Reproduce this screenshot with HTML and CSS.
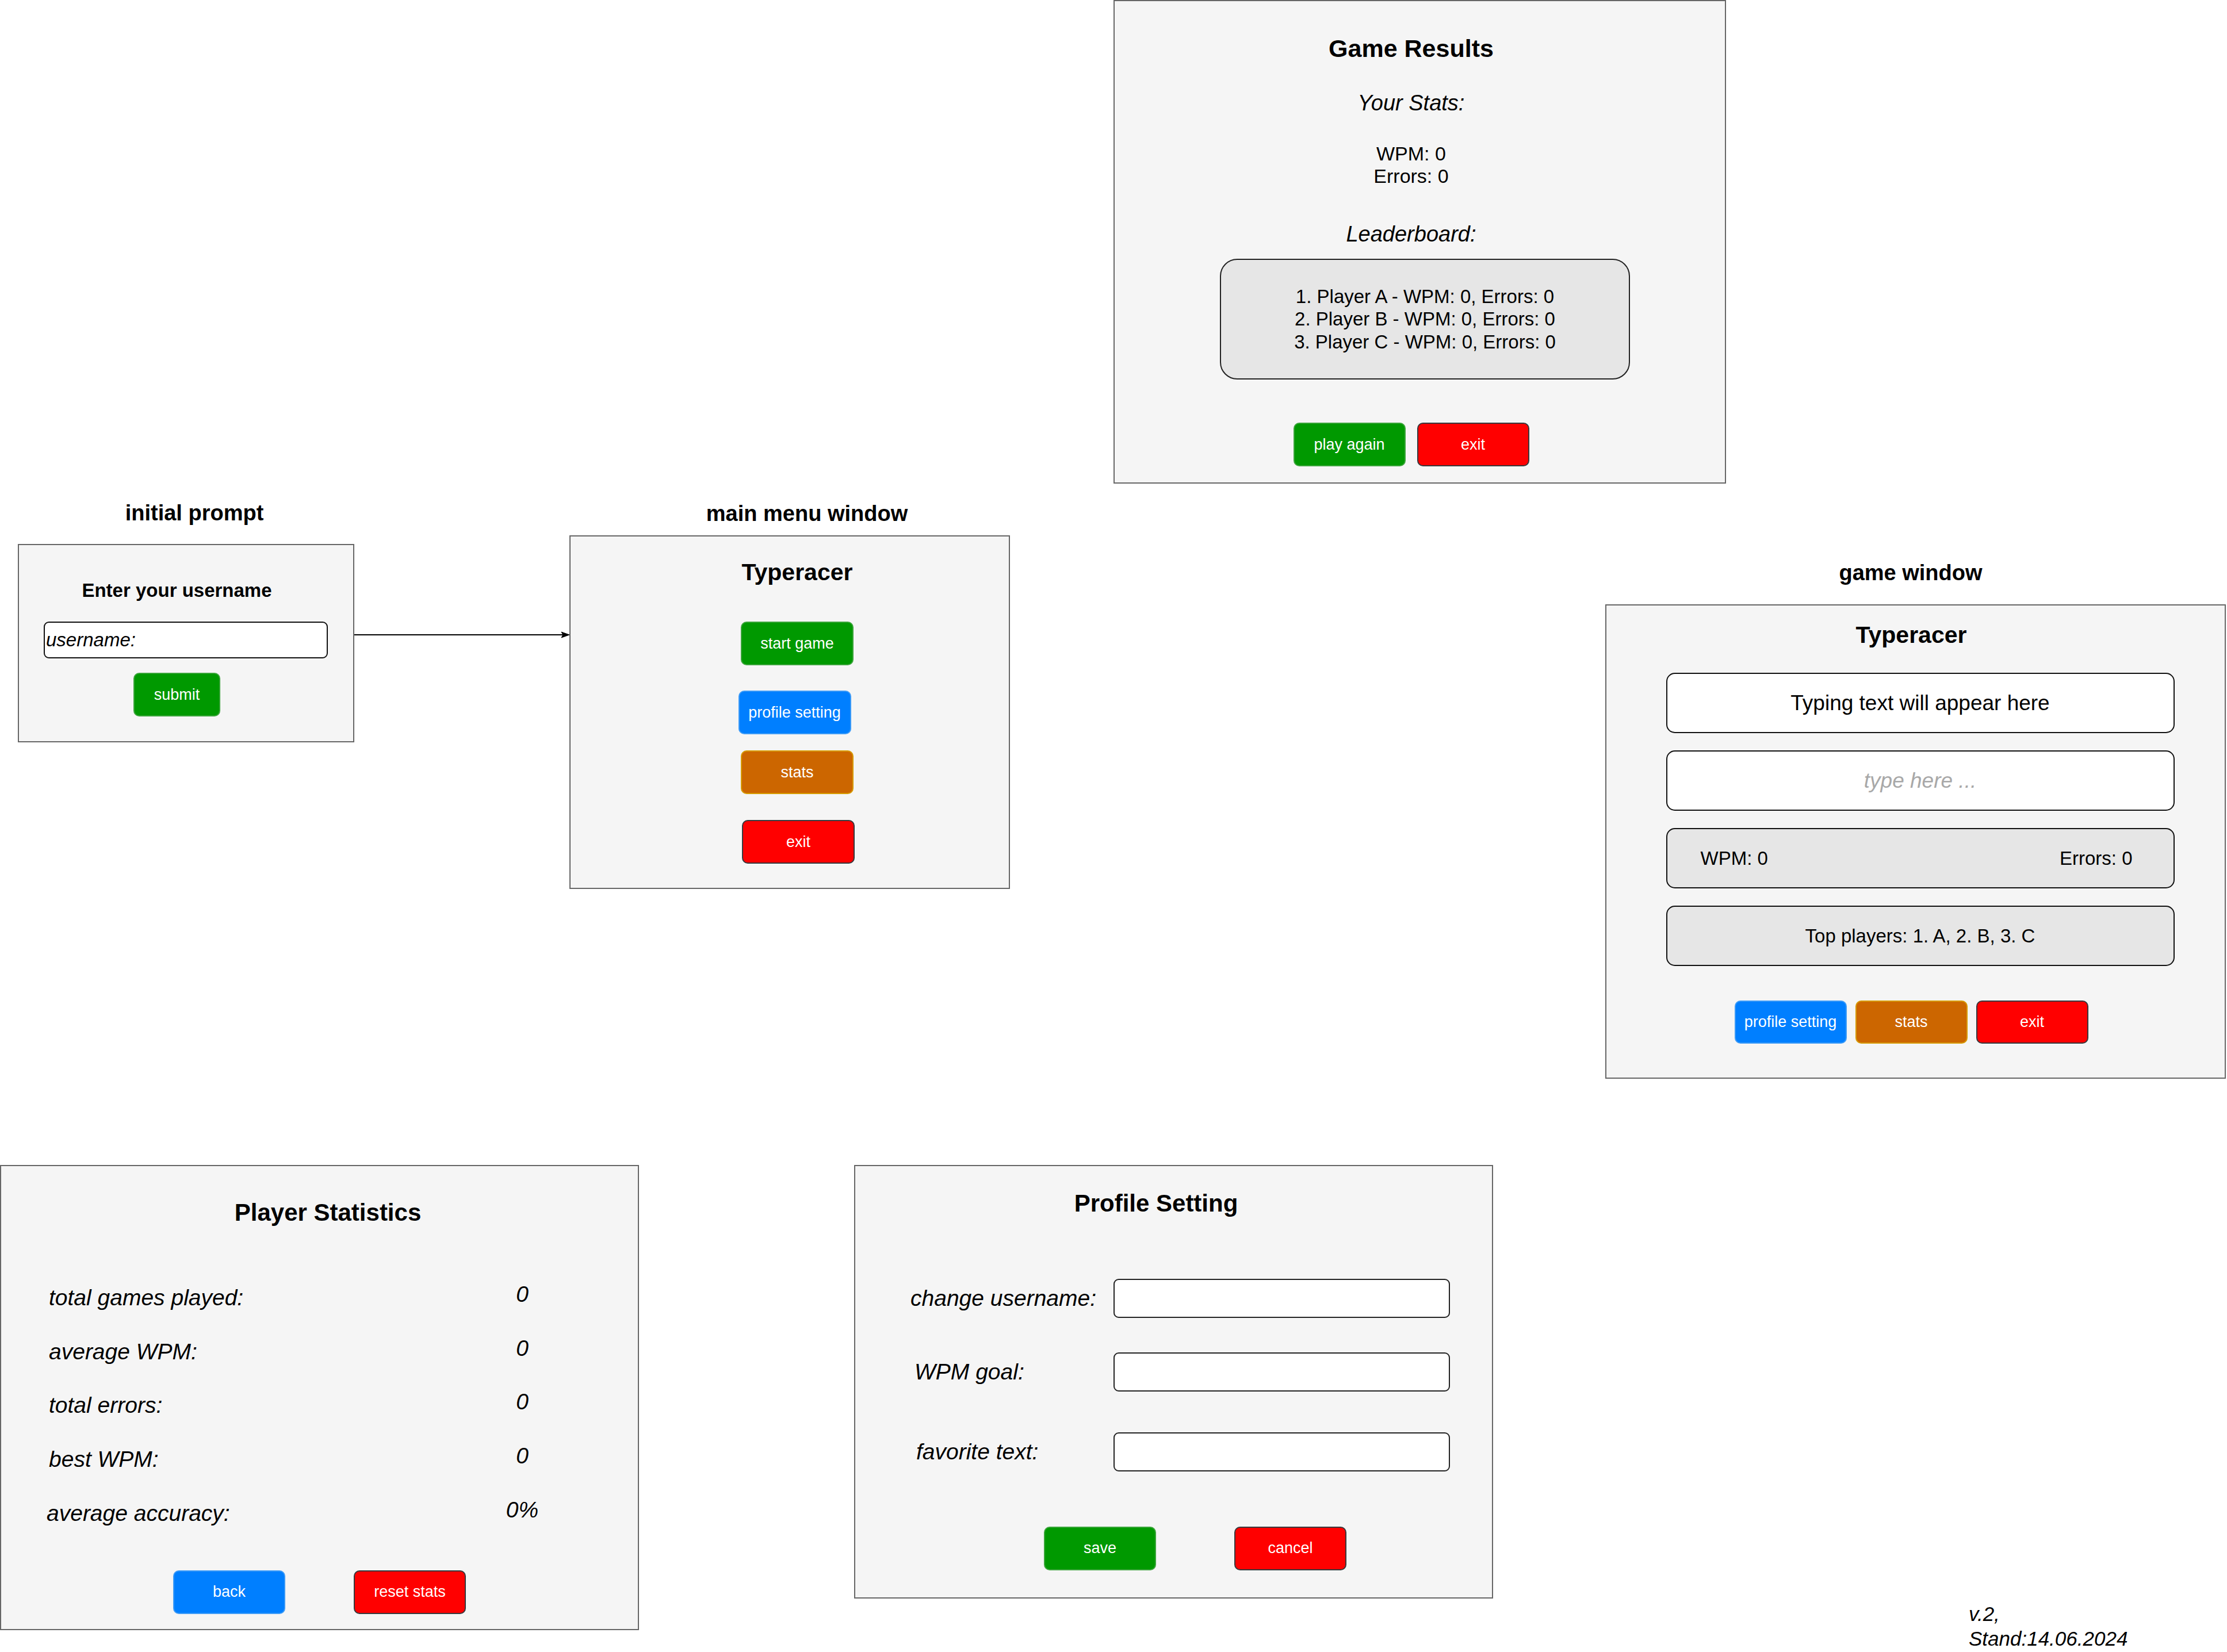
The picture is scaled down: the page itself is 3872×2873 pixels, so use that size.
FILE: index.html
```html
<!DOCTYPE html>
<html lang="en">
<head>
<meta charset="utf-8">
<title>Typeracer mockups</title>
<link rel="stylesheet" href="styles.css">
</head>
<body>
<div class="canvas">

  <div class="label label-initial">initial prompt</div>
  <div class="label label-menu">main menu window</div>
  <div class="label label-game">game window</div>

  <svg class="connector" width="380" height="16" viewBox="0 0 380 16">
    <line x1="2" y1="8" x2="368" y2="8" stroke="#000" stroke-width="2"/>
    <polygon points="362,3 376,8 362,13 365,8" fill="#000" stroke="#000" stroke-width="1"/>
  </svg>

  <!-- Game Results -->
  <section class="window win-results">
    <div class="title title-43">Game Results</div>
    <div class="sub results-sub">Your Stats:</div>
    <div class="stat-lines">WPM: 0<br>Errors: 0</div>
    <div class="sub leader-sub">Leaderboard:</div>
    <div class="leader-box">
      <div>1. Player A - WPM: 0, Errors: 0</div>
      <div>2. Player B - WPM: 0, Errors: 0</div>
      <div>3. Player C - WPM: 0, Errors: 0</div>
    </div>
    <div class="btn-row results-btns">
      <div class="btn green">play again</div>
      <div class="btn red">exit</div>
    </div>
  </section>

  <!-- Initial prompt -->
  <section class="window win-initial">
    <div class="prompt-title">Enter your username</div>
    <div class="input-username">username:</div>
    <div class="btn green btn-submit">submit</div>
  </section>

  <!-- Main menu -->
  <section class="window win-menu">
    <div class="title title-41">Typeracer</div>
    <div class="btn green menu-start">start game</div>
    <div class="btn blue menu-profile">profile setting</div>
    <div class="btn orange menu-stats">stats</div>
    <div class="btn red menu-exit">exit</div>
  </section>

  <!-- Game window -->
  <section class="window win-game">
    <div class="title title-41">Typeracer</div>
    <div class="game-box box-white box-first">Typing text will appear here</div>
    <div class="game-box box-white box-next placeholder">type here ...</div>
    <div class="game-box box-gray box-next box-split small"><span>WPM: 0</span><span>Errors: 0</span></div>
    <div class="game-box box-gray box-next small">Top players: 1. A, 2. B, 3. C</div>
    <div class="btn-row game-btns">
      <div class="btn blue btn-game">profile setting</div>
      <div class="btn orange btn-game">stats</div>
      <div class="btn red btn-game">exit</div>
    </div>
  </section>

  <!-- Player statistics -->
  <section class="window win-stats">
    <div class="title title-42 stats-title">Player Statistics</div>
    <div class="stats-list">
      <div class="stat-row"><span class="stat-label">total games played:</span><span class="stat-value">0</span></div>
      <div class="stat-row"><span class="stat-label">average WPM:</span><span class="stat-value">0</span></div>
      <div class="stat-row"><span class="stat-label">total errors:</span><span class="stat-value">0</span></div>
      <div class="stat-row"><span class="stat-label">best WPM:</span><span class="stat-value">0</span></div>
      <div class="stat-row"><span class="stat-label label-out">average accuracy:</span><span class="stat-value">0%</span></div>
    </div>
    <div class="btn-row stats-btns">
      <div class="btn blue">back</div>
      <div class="btn red">reset stats</div>
    </div>
  </section>

  <!-- Profile setting -->
  <section class="window win-profile">
    <div class="title title-42 profile-title">Profile Setting</div>
    <div class="form">
      <div class="form-row row-1"><span class="form-label">change username:</span><div class="field"></div></div>
      <div class="form-row row-2"><span class="form-label indent-7">WPM goal:</span><div class="field"></div></div>
      <div class="form-row row-3"><span class="form-label indent-10">favorite text:</span><div class="field"></div></div>
    </div>
    <div class="btn-row profile-btns">
      <div class="btn green">save</div>
      <div class="btn red">cancel</div>
    </div>
  </section>

  <div class="version">v.2,<br>Stand:14.06.2024</div>
</div>
</body>
</html>
```

FILE: styles.css
```css
html, body {
  margin: 0;
  padding: 0;
  background: #ffffff;
}

body {
  font-family: "Liberation Sans", Arial, Helvetica, sans-serif;
  color: #000000;
}

.canvas {
  position: relative;
  width: 3872px;
  height: 2873px;
  overflow: hidden;
  background: #ffffff;
}

/* ---------- free canvas labels ---------- */
.label {
  position: absolute;
  width: 400px;
  text-align: center;
  font-weight: bold;
  font-size: 38px;
  line-height: 44px;
  white-space: nowrap;
}
.label-initial { left: 138px; top: 870px; }
.label-menu { left: 1203px; top: 871px; }
.label-game { left: 3122px; top: 974px; }

.connector {
  position: absolute;
  left: 614px;
  top: 1096px;
}

.version {
  position: absolute;
  left: 3423px;
  top: 2785px;
  font-style: italic;
  font-size: 35px;
  line-height: 43px;
  white-space: nowrap;
}

/* ---------- windows ---------- */
.window {
  position: absolute;
  box-sizing: border-box;
  background: #f5f5f5;
  border: 2px solid #666666;
  display: flex;
  flex-direction: column;
  align-items: center;
}

.title {
  font-weight: bold;
  white-space: nowrap;
}
.title-43 { font-size: 43px; line-height: 50px; }
.title-42 { font-size: 42px; line-height: 48px; }
.title-41 { font-size: 41px; line-height: 47px; }

/* ---------- buttons ---------- */
.btn {
  box-sizing: border-box;
  width: 195px;
  height: 76px;
  border-radius: 10px;
  display: flex;
  align-items: center;
  justify-content: center;
  color: #ffffff;
  font-size: 27px;
  white-space: nowrap;
  border: 2px solid transparent;
}
.green { background: #009900; border-color: #3aa53a; }
.blue { background: #007fff; border-color: #3d9bf7; }
.orange { background: #cc6600; border-color: #d79b00; }
.red { background: #ff0000; border-color: #36393d; }

.btn-row {
  display: flex;
  flex-direction: row;
}

/* ---------- Game Results ---------- */
.win-results {
  left: 1936px;
  top: 0;
  width: 1065px;
  height: 841px;
  padding: 57px 30px 0 0;
}
.sub {
  font-style: italic;
  font-size: 38px;
  line-height: 44px;
}
.results-sub { margin-top: 48px; }
.stat-lines {
  margin-top: 47px;
  font-size: 34px;
  line-height: 39px;
  text-align: center;
}
.leader-sub { margin-top: 59px; }
.leader-box {
  box-sizing: border-box;
  margin-top: 21px;
  margin-left: 48px;
  width: 713px;
  height: 210px;
  background: #e6e6e6;
  border: 2px solid #222222;
  border-radius: 30px;
  display: flex;
  flex-direction: column;
  align-items: center;
  justify-content: center;
  font-size: 33px;
  line-height: 39.5px;
  white-space: nowrap;
}
.results-btns {
  margin-top: 75px;
  gap: 20px;
}

/* ---------- Initial prompt ---------- */
.win-initial {
  left: 31px;
  top: 946px;
  width: 585px;
  height: 345px;
  padding: 60px 32px 0 0;
}
.prompt-title {
  font-weight: bold;
  font-size: 33px;
  line-height: 38px;
  white-space: nowrap;
}
.input-username {
  box-sizing: border-box;
  margin-top: 35px;
  margin-left: 31px;
  width: 494px;
  height: 64px;
  background: #ffffff;
  border: 2px solid #111111;
  border-radius: 9px;
  display: flex;
  align-items: center;
  padding-left: 2px;
  font-style: italic;
  font-size: 33px;
}
.btn-submit {
  margin-top: 25px;
  width: 151px;
}

/* ---------- Main menu ---------- */
.win-menu {
  left: 990px;
  top: 931px;
  width: 766px;
  height: 615px;
  padding: 39px 0 0 26px;
}
.win-menu .btn { width: 196px; }
.menu-start { margin-top: 62px; }
.menu-profile { margin-top: 44px; margin-right: 9px; }
.menu-stats { margin-top: 28px; }
.menu-exit { margin-top: 45px; margin-left: 4px; }

/* ---------- Game window ---------- */
.win-game {
  left: 2791px;
  top: 1051px;
  width: 1079px;
  height: 825px;
  padding: 28px 15px 0 0;
}
.game-box {
  box-sizing: border-box;
  width: 884px;
  height: 105px;
  margin-left: 31px;
  border: 2px solid #111111;
  border-radius: 15px;
  display: flex;
  align-items: center;
  justify-content: center;
  font-size: 37px;
  white-space: nowrap;
}
.box-white { background: #ffffff; }
.box-gray { background: #e6e6e6; }
.box-first { margin-top: 42px; }
.box-next { margin-top: 30px; }
.placeholder {
  font-style: italic;
  color: #a8a8a8;
}
.small { font-size: 33px; }
.box-split {
  justify-content: space-between;
  padding: 0 71px 0 58px;
}
.game-btns {
  margin-top: 60px;
  gap: 15px;
}
.btn-game { height: 75px; }

/* ---------- Player statistics ---------- */
.win-stats {
  left: 0;
  top: 2026px;
  width: 1111px;
  height: 809px;
  padding-top: 57px;
}
.stats-title { margin-left: 29px; }
.stats-list {
  align-self: stretch;
  margin-top: 95px;
  display: flex;
  flex-direction: column;
  gap: 42.7px;
}
.stat-row {
  display: flex;
  align-items: flex-end;
  padding-left: 83px;
  font-style: italic;
  font-size: 39px;
  line-height: 45px;
}
.stat-label {
  width: 740px;
  white-space: nowrap;
}
.label-out { margin-left: -4px; margin-right: 4px; }
.stat-value {
  width: 166px;
  text-align: center;
  padding-bottom: 6px;
}
.stats-btns {
  margin-top: 77px;
  gap: 119px;
}

/* ---------- Profile setting ---------- */
.win-profile {
  left: 1485px;
  top: 2026px;
  width: 1111px;
  height: 754px;
  padding-top: 41px;
}
.profile-title { margin-right: 61px; }
.form {
  align-self: stretch;
  display: flex;
  flex-direction: column;
}
.form-row {
  display: flex;
  align-items: center;
  height: 68px;
  padding-left: 96px;
}
.row-1 { margin-top: 107px; }
.row-2 { margin-top: 59.6px; }
.row-3 { margin-top: 71.4px; }
.form-label {
  box-sizing: border-box;
  width: 353px;
  font-style: italic;
  font-size: 39px;
  white-space: nowrap;
}
.indent-7 { padding-left: 7px; }
.indent-10 { padding-left: 10px; }
.field {
  box-sizing: border-box;
  width: 585px;
  height: 68px;
  background: #ffffff;
  border: 2px solid #222222;
  border-radius: 9px;
}
.profile-btns {
  margin-top: 96px;
  margin-left: 75px;
  gap: 136px;
}
```
